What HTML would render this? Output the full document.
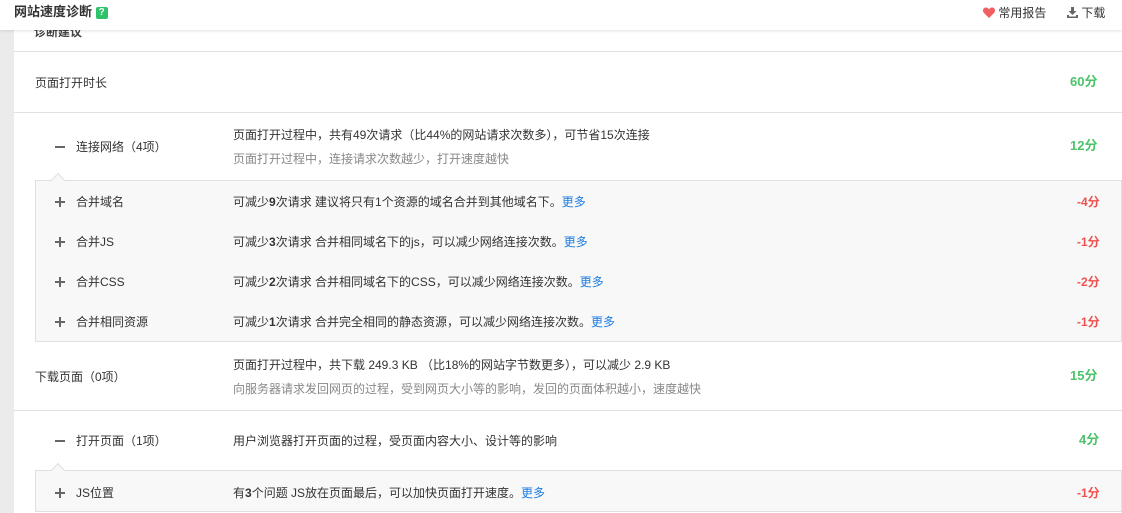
<!DOCTYPE html>
<html><head><meta charset="utf-8"><style>
*{margin:0;padding:0;box-sizing:border-box}
body{width:1122px;height:513px;overflow:hidden;background:#fff;font-family:"Liberation Sans","Noto Sans CJK SC",sans-serif;font-size:12px;color:#333;position:relative}
.strip{position:absolute;left:0;top:0;width:14px;height:513px;background:#ebebeb}
.hdr{position:absolute;left:0;top:0;width:1122px;height:30px;background:#fff;box-shadow:0 1px 3px rgba(0,0,0,.12);z-index:5}
.t{position:absolute;white-space:nowrap;line-height:16px}
.hl{position:absolute;left:14px;height:1px;width:1108px;background:#e0e0e0}
.panel{position:absolute;left:35px;width:1087px;background:#f8f8f8;border:1px solid #e0e0e0}
.arr{position:absolute;left:53px;width:10px;height:10px;background:#f8f8f8;border-left:1px solid #e0e0e0;border-top:1px solid #e0e0e0;transform:rotate(45deg)}
.g{color:#4cc36a;font-weight:bold;font-size:13px}
.r{color:#f05050;font-weight:bold}
.gr{color:#888}
.b{color:#1e7de0}
.pm{position:absolute;left:55px;width:10px;height:10px}
.pm:before{content:"";position:absolute;left:0;top:4px;width:10px;height:2px;background:#666}
.pm:after{content:"";position:absolute;left:4px;top:0;width:2px;height:10px;background:#666}
.minus{position:absolute;left:55px;width:10px;height:2px;background:#666}
</style></head><body>
<div class="strip"></div>
<div class="t" style="left:34px;top:24px;font-size:12px;font-weight:bold;color:#444">诊断建议</div>
<div class="hdr">
<div class="t" style="left:14px;top:4px;font-size:13px;font-weight:bold;color:#333">网站速度诊断 <span style="display:inline-block;width:12px;height:12px;background:#2ec36a;color:#fff;font-size:10px;line-height:12px;text-align:center;border-radius:2px;vertical-align:1px">?</span></div>
<div class="t" style="left:983px;top:5px"><svg width="12" height="11" viewBox="0 0 12 11" style="vertical-align:-1px"><path d="M6 11L1 6C-1 4 0 0.5 3 0.5 4.5 0.5 5.5 1.5 6 2.5 6.5 1.5 7.5 0.5 9 0.5 12 0.5 13 4 11 6z" fill="#f06060"/></svg> 常用报告</div>
<div class="t" style="left:1067px;top:5px"><svg width="11" height="11" viewBox="0 0 11 11" style="vertical-align:-1px"><path d="M4 0h3v4h2.5L5.5 8 1.5 4H4z M0 8h2v1.5h7V8h2v3H0z" fill="#666"/></svg> 下载</div>
</div>
<div class="hl" style="top:51px"></div>
<div class="t" style="left:35px;top:75px">页面打开时长</div>
<div class="t g" style="left:1070px;top:74px">60分</div>
<div class="hl" style="top:112px"></div>
<div class="minus" style="top:146px"></div>
<div class="t" style="left:76px;top:139px">连接网络（4项）</div>
<div class="t" style="left:233px;top:127px">页面打开过程中，共有49次请求（比44%的网站请求次数多），可节省15次连接</div>
<div class="t gr" style="left:233px;top:151px">页面打开过程中，连接请求次数越少，打开速度越快</div>
<div class="t g" style="left:1070px;top:138px">12分</div>
<div class="panel" style="top:180px;height:162px"></div>
<div class="arr" style="top:175px"></div>
<div class="pm" style="top:197px"></div><div class="t" style="left:76px;top:194px">合并域名</div>
<div class="t" style="left:233px;top:194px">可减少<b>9</b>次请求 建议将只有1个资源的域名合并到其他域名下。<span class="b">更多</span></div>
<div class="t r" style="left:1077px;top:194px">-4分</div>
<div class="pm" style="top:237px"></div><div class="t" style="left:76px;top:234px">合并JS</div>
<div class="t" style="left:233px;top:234px">可减少<b>3</b>次请求 合并相同域名下的js，可以减少网络连接次数。<span class="b">更多</span></div>
<div class="t r" style="left:1077px;top:234px">-1分</div>
<div class="pm" style="top:277px"></div><div class="t" style="left:76px;top:274px">合并CSS</div>
<div class="t" style="left:233px;top:274px">可减少<b>2</b>次请求 合并相同域名下的CSS，可以减少网络连接次数。<span class="b">更多</span></div>
<div class="t r" style="left:1077px;top:274px">-2分</div>
<div class="pm" style="top:317px"></div><div class="t" style="left:76px;top:314px">合并相同资源</div>
<div class="t" style="left:233px;top:314px">可减少<b>1</b>次请求 合并完全相同的静态资源，可以减少网络连接次数。<span class="b">更多</span></div>
<div class="t r" style="left:1077px;top:314px">-1分</div>
<div class="t" style="left:35px;top:369px">下载页面（0项）</div>
<div class="t" style="left:233px;top:357px">页面打开过程中，共下载 249.3 KB （比18%的网站字节数更多），可以减少 2.9 KB</div>
<div class="t gr" style="left:233px;top:381px">向服务器请求发回网页的过程，受到网页大小等的影响，发回的页面体积越小，速度越快</div>
<div class="t g" style="left:1070px;top:368px">15分</div>
<div class="hl" style="top:410px"></div>
<div class="minus" style="top:440px"></div>
<div class="t" style="left:76px;top:433px">打开页面（1项）</div>
<div class="t" style="left:233px;top:433px">用户浏览器打开页面的过程，受页面内容大小、设计等的影响</div>
<div class="t g" style="left:1079px;top:432px">4分</div>
<div class="panel" style="top:470px;height:42px"></div>
<div class="arr" style="top:465px"></div>
<div class="pm" style="top:488px"></div><div class="t" style="left:76px;top:485px">JS位置</div>
<div class="t" style="left:233px;top:485px">有<b>3</b>个问题 JS放在页面最后，可以加快页面打开速度。<span class="b">更多</span></div>
<div class="t r" style="left:1077px;top:485px">-1分</div>
</body></html>
